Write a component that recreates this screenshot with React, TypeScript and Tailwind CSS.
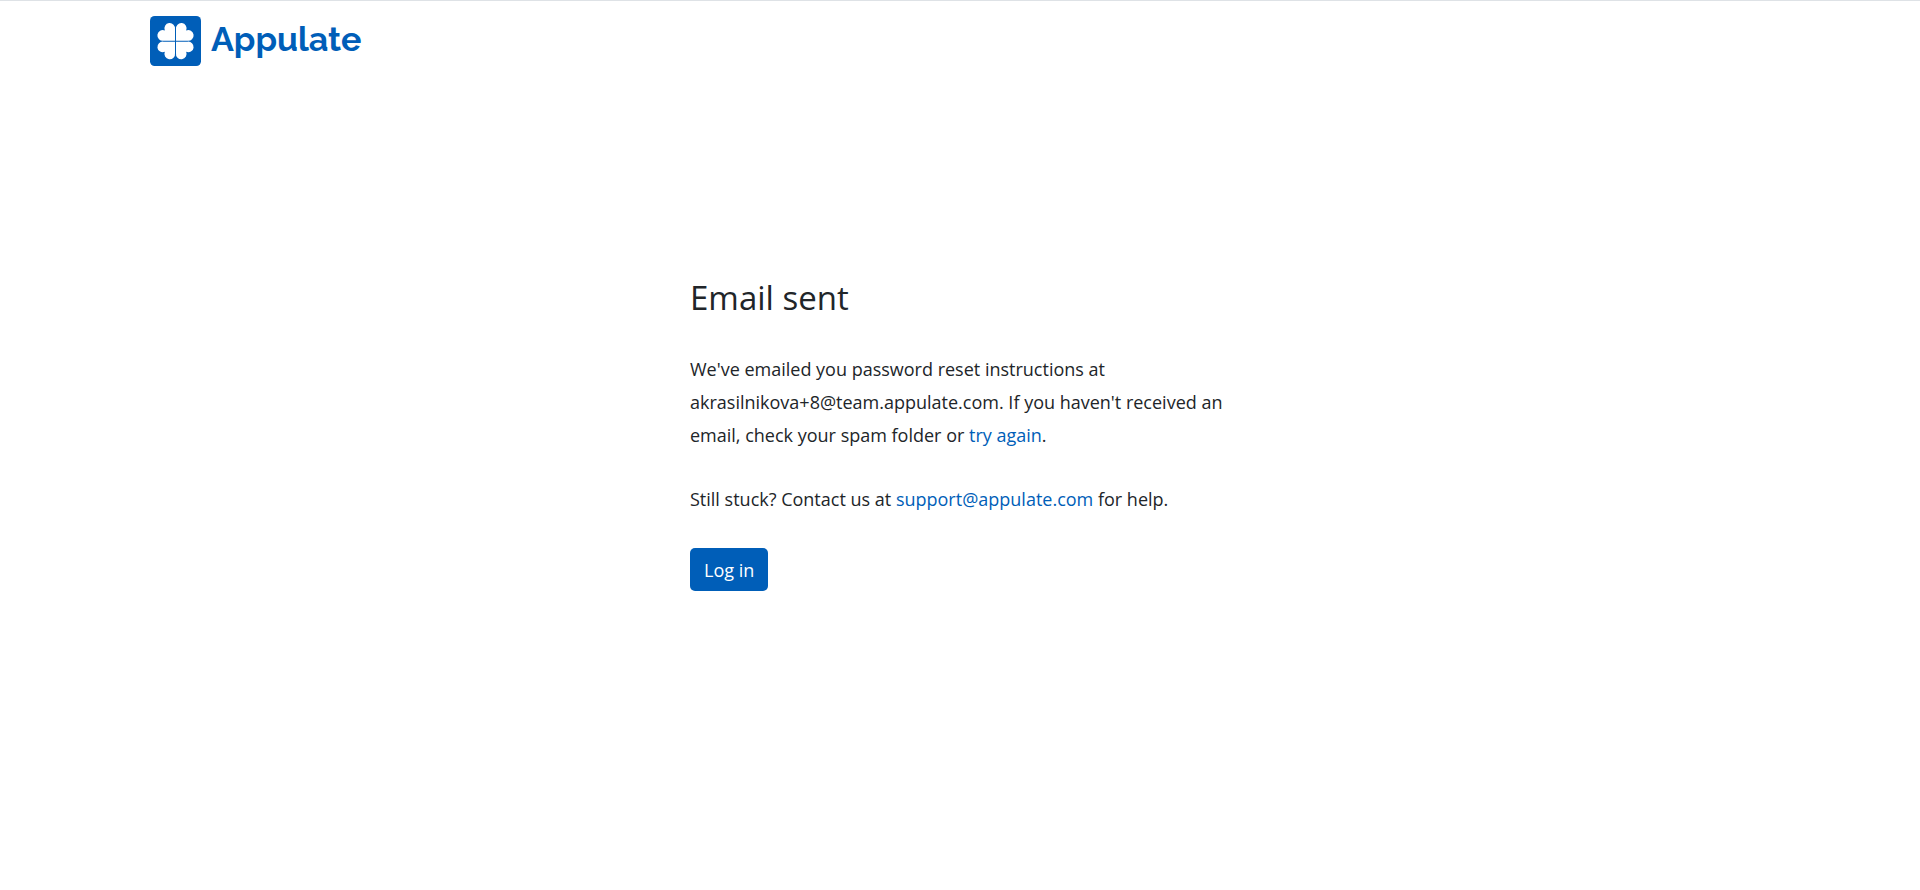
const LEAF_ROTATIONS = [0, 90, 180, 270];

function CloverIcon() {
  return (
    <svg viewBox="0 0 153 150" className="h-[50px] w-[51px]" aria-hidden="true">
      <rect width="153" height="150" rx="14" fill="#005eb8" />
      {LEAF_ROTATIONS.map((deg) => (
        <path
          key={deg}
          transform={`translate(76.5 75.5) rotate(${deg})`}
          d="M-1.5 -1.5H-36A16 16 0 1 1 -32 -32A16 16 0 1 1 -1.5 -36Z"
          fill="#fff"
        />
      ))}
    </svg>
  );
}

function Header() {
  return (
    <header className="border-t border-[#dee2e6]">
      <div className="mx-auto flex w-full max-w-[1620px] pt-[15px]">
        <a href="/" className="flex items-center gap-[10px] text-[#005eb8]">
          <CloverIcon />
          <span className="pb-1 font-['Raleway','Lato',sans-serif] text-[34px] leading-10 font-bold">
            Appulate
          </span>
        </a>
      </div>
    </header>
  );
}

export default function App() {
  return (
    <div className="min-h-screen bg-white font-['Segoe_UI','Open_Sans',sans-serif] text-lg leading-[33px] text-[#212529]">
      <Header />

      <main className="mx-auto mt-[210px] w-full max-w-[540px]">
        <h1 className="text-[33px] leading-[44px]">Email sent</h1>

        <p className="mt-[33px]">
          We've emailed you password reset instructions at akrasilnikova+8@team.appulate.com. If you
          haven't received an email, check your spam folder or{" "}
          <a href="/forgot-password" className="text-[#005eb8] hover:underline">
            try again
          </a>
          .
        </p>

        <p className="mt-[31px]">
          Still stuck? Contact us at{" "}
          <a href="mailto:support@appulate.com" className="text-[#005eb8] hover:underline">
            support@appulate.com
          </a>{" "}
          for help.
        </p>

        <button
          type="button"
          className="mt-8 h-[43px] rounded-[5px] bg-[#005eb8] px-[14px] leading-6 text-white hover:bg-[#004b93]"
        >
          Log in
        </button>
      </main>
    </div>
  );
}
